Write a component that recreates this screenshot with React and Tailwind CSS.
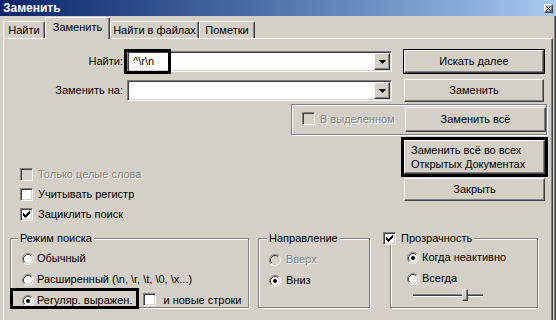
import React from "react";

const raised =
  "bg-[#d4d0c8] border border-t-white border-l-white border-r-[#404040] border-b-[#404040] shadow-[inset_-1px_-1px_0_#808080]";
const sunken =
  "border border-t-[#808080] border-l-[#808080] border-r-white border-b-white shadow-[inset_1px_1px_0_#404040,inset_-1px_-1px_0_#d4d0c8]";
const etched = "border border-[#808080] shadow-[inset_1px_1px_0_#fff,1px_1px_0_#fff]";
const grey = "text-[#808080] [text-shadow:1px_1px_0_#fff]";

function Check({ checked, disabled }) {
  return (
    <span
      className={`relative inline-block w-[13px] h-[13px] shrink-0 p-[1px] ${sunken} ${
        disabled ? "bg-[#d4d0c8]" : "bg-white"
      }`}
    >
      {checked && (
        <svg width="7" height="7" viewBox="0 0 7 7" className="absolute left-[2px] top-[2px]" shapeRendering="crispEdges">
          <rect x="0" y="2" width="1" height="3" />
          <rect x="1" y="3" width="1" height="3" />
          <rect x="2" y="4" width="1" height="3" />
          <rect x="3" y="3" width="1" height="3" />
          <rect x="4" y="2" width="1" height="3" />
          <rect x="5" y="1" width="1" height="3" />
          <rect x="6" y="0" width="1" height="3" />
        </svg>
      )}
    </span>
  );
}

function Radio({ checked, disabled }) {
  return (
    <svg width="12" height="12" viewBox="0 0 12 12" className="shrink-0">
      <circle cx="6" cy="6" r="4.5" fill={disabled ? "#d4d0c8" : "#fff"} />
      <path d="M2.11 9.89A5.5 5.5 0 0 1 9.89 2.11" fill="none" stroke="#808080" />
      <path d="M9.89 2.11A5.5 5.5 0 0 1 2.11 9.89" fill="none" stroke="#fff" />
      <path d="M2.82 9.18A4.5 4.5 0 0 1 9.18 2.82" fill="none" stroke="#404040" />
      <path d="M9.18 2.82A4.5 4.5 0 0 1 2.82 9.18" fill="none" stroke="#d4d0c8" />
      {checked && <circle cx="6" cy="6" r="2" fill="#000" />}
    </svg>
  );
}

function Combo({ value, marked }) {
  return (
    <div className={`relative flex h-[21px] w-[265px] bg-white p-[1px] ${sunken}`}>
      <span className="flex-1 flex items-center pl-[4px]">{value}</span>
      <span className={`w-[16px] flex items-center justify-center ${raised}`}>
        <svg width="7" height="4" viewBox="0 0 7 4" shapeRendering="crispEdges">
          <path d="M0 0h7v1h-1v1h-1v1h-1v1h-1v-1h-1v-1h-1v-1h-1z" />
        </svg>
      </span>
      {marked && (
        <span className="absolute left-[-4px] top-[-3px] w-[47px] h-[25px] border-[3px] border-black" />
      )}
    </div>
  );
}

function Btn({ children, className = "" }) {
  return <div className={`flex items-center justify-center ${raised} ${className}`}>{children}</div>;
}

function Tab({ children, active, w }) {
  return active ? (
    <div
      className={`${w} h-[22px] mb-[-1px] relative z-10 flex justify-center pt-[3px] bg-[#d4d0c8] border-t border-l border-r border-t-white border-l-white border-r-[#404040] rounded-t-[2px] shadow-[inset_-1px_0_0_#808080]`}
    >
      {children}
    </div>
  ) : (
    <div
      className={`${w} h-[17px] flex justify-center pt-[2px] border-t border-l border-r border-t-white border-l-white border-r-[#404040] rounded-t-[2px] shadow-[inset_-1px_0_0_#808080]`}
    >
      {children}
    </div>
  );
}

function Row({ children, className = "" }) {
  return <div className={`flex items-center h-[21px] ${className}`}>{children}</div>;
}

export default function App() {
  return (
    <div className="w-[556px] h-[320px] overflow-hidden bg-[#d4d0c8] text-[11px] leading-[13px] text-black font-['Liberation_Sans',Arial,sans-serif] flex flex-col">
      <div className="h-[16px] shrink-0 flex items-center justify-between pl-[3px] pr-[3px] bg-linear-to-r from-[#0a246a] to-[#a6caf0]">
        <span className="text-white font-bold text-[12px]">Заменить</span>
        <span className={`w-[9px] h-[9px] flex items-center justify-center ${raised}`}>
          <svg width="5" height="5" viewBox="0 0 5 5" shapeRendering="crispEdges">
            <path d="M0 0h1v1h1v1h1v-1h1v-1h1v1h-1v1h-1v1h1v1h1v1h-1v-1h-1v-1h-1v1h-1v1h-1v-1h1v-1h1v-1h-1v-1h-1z" />
          </svg>
        </span>
      </div>

      <div className="flex-1 flex flex-col pl-[3px] pr-[3px] shadow-[inset_-1px_0_0_#404040,inset_-2px_0_0_#808080]">
        <div className="flex items-end h-[22px] shrink-0">
          <Tab w="w-[42px]">Найти</Tab>
          <Tab w="w-[65px]" active>
            Заменить
          </Tab>
          <Tab w="w-[89px]">Найти в файлах</Tab>
          <Tab w="w-[56px]">Пометки</Tab>
        </div>

        <div className="flex-1 flex flex-col border-t border-l border-r border-t-white border-l-white border-r-[#404040] shadow-[inset_-1px_0_0_#808080]">
          <div className="flex items-center h-[25px] mt-[10px]">
            <span className="w-[119px] text-right">Найти:</span>
            <div className="ml-[4px]">
              <Combo value={"^\\r\\n"} marked />
            </div>
            <div className="ml-[11px] w-[142px] h-[25px] border border-black">
              <Btn className="h-full">Искать далее</Btn>
            </div>
          </div>

          <div className="flex items-center h-[23px] mt-[5px]">
            <span className="w-[119px] text-right">Заменить на:</span>
            <div className="ml-[4px]">
              <Combo value="" />
            </div>
            <Btn className="ml-[12px] w-[140px] h-[23px]">Заменить</Btn>
          </div>

          <div className="flex mt-[2px]">
            <div className="w-[287px] pl-[16px] pt-[60px] flex flex-col">
              <div className="flex items-center gap-[5px] h-[20px]">
                <Check disabled />
                <span className={grey}>Только целые слова</span>
              </div>
              <div className="flex items-center gap-[5px] h-[20px]">
                <Check />
                <span>Учитывать регистр</span>
              </div>
              <div className="flex items-center gap-[5px] h-[20px]">
                <Check checked />
                <span>Зациклить поиск</span>
              </div>
            </div>

            <div className="w-[256px] flex flex-col">
              <div className={`h-[31px] flex items-center ${etched}`}>
                <span className="ml-[10px]">
                  <Check disabled />
                </span>
                <span className={`ml-[5px] ${grey}`}>В выделенном</span>
                <Btn className="ml-auto w-[141px] h-[25px]">Заменить всё</Btn>
              </div>
              <div className="ml-auto mr-[-1px] mt-[2px] w-[147px] h-[40px] border-[3px] border-black">
                <div className={`h-full flex flex-col justify-center pl-[6px] leading-[14px] ${raised}`}>
                  <span>Заменить всё во всех</span>
                  <span>Открытых Документах</span>
                </div>
              </div>
              <Btn className="ml-auto mr-[2px] mt-[1px] w-[141px] h-[23px]">Закрыть</Btn>
            </div>
          </div>

          <div className="flex mt-[8px] ml-[6px]">
            <fieldset className={`relative w-[239px] h-[76px] ${etched}`}>
              <legend className="ml-[7px] px-[2px] bg-[#d4d0c8]">Режим поиска</legend>
              <div className="pl-[11px] mt-[3px]">
                <Row className="gap-[3px]">
                  <Radio />
                  <span>Обычный</span>
                </Row>
                <Row className="gap-[3px]">
                  <Radio />
                  <span>{"Расширенный (\\n, \\r, \\t, \\0, \\x...)"}</span>
                </Row>
                <Row className="gap-[3px]">
                  <Radio checked />
                  <span>Регуляр. выражен.</span>
                  <span className="ml-[8px] mr-[4px]">
                    <Check />
                  </span>
                  <span>и новые строки</span>
                </Row>
              </div>
              <span className="absolute left-[-1px] top-[43px] w-[129px] h-[21px] border-[3px] border-black" />
            </fieldset>

            <fieldset className={`ml-[9px] w-[112px] h-[76px] ${etched}`}>
              <legend className="ml-[8px] px-[2px] bg-[#d4d0c8]">Направление</legend>
              <div className="pl-[10px] mt-[4px]">
                <Row className="gap-[5px]">
                  <Radio disabled />
                  <span className={grey}>Вверх</span>
                </Row>
                <Row className="gap-[5px]">
                  <Radio checked />
                  <span>Вниз</span>
                </Row>
              </div>
            </fieldset>

            <fieldset className={`ml-[20px] w-[148px] h-[76px] ${etched}`}>
              <legend className="ml-[-8px] pr-[2px] bg-[#d4d0c8] flex items-center gap-[5px]">
                <Check checked />
                <span>Прозрачность</span>
              </legend>
              <div className="pl-[16px] mt-[2px]">
                <Row className="gap-[3px]">
                  <Radio checked />
                  <span>Когда неактивно</span>
                </Row>
                <Row className="gap-[3px]">
                  <Radio />
                  <span>Всегда</span>
                </Row>
                <div className="relative ml-[6px] w-[70px] h-[12px] flex items-center">
                  <div className="w-full h-[3px] border-t border-t-[#808080] border-b border-b-white bg-[#404040]" />
                  <span className={`absolute left-[49px] top-0 w-[6px] h-[12px] ${raised}`} />
                </div>
              </div>
            </fieldset>
          </div>
        </div>
      </div>
    </div>
  );
}
